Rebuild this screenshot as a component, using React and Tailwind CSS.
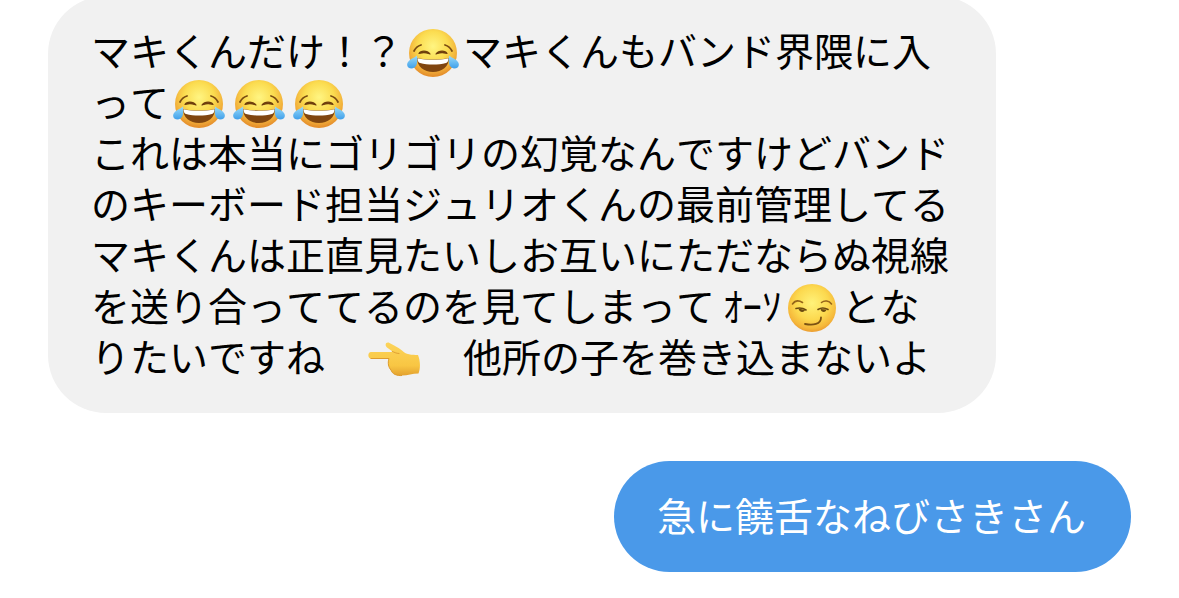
import React from 'react';

const emoji = 'inline-block w-[52px] h-[50px] mx-1 -my-4 align-[3px]';

function JoyEmoji() {
  return (
    <svg viewBox="0 0 52 50" role="img" aria-label="tears of joy" className={emoji}>
      <defs>
        <radialGradient id="joyFace" cx="0.5" cy="0.36" r="0.62">
          <stop offset="0" stopColor="#fff582" />
          <stop offset="0.5" stopColor="#fbdc50" />
          <stop offset="0.82" stopColor="#f2b03a" />
          <stop offset="1" stopColor="#e58f2c" />
        </radialGradient>
        <linearGradient id="joyTear" x1="0" y1="0" x2="0" y2="1">
          <stop offset="0" stopColor="#9adcf9" />
          <stop offset="1" stopColor="#3f9fea" />
        </linearGradient>
      </defs>
      <circle cx="26" cy="24" r="24" fill="url(#joyFace)" />
      <path d="M7 22C8.5 19 11 16.8 14 16M45 22C43.5 19 41 16.8 38 16" fill="none" stroke="#7a4c12" strokeWidth="1.8" strokeLinecap="round" />
      <path d="M12 24.5C13.5 21.5 20 21 23 25C20 23.8 15 23.5 12 24.5ZM29 25C32 21 38.5 21.5 40 24.5C37 23.5 32 23.8 29 25Z" fill="#6f3f0d" stroke="#6f3f0d" strokeWidth="1.2" strokeLinejoin="round" />
      <path d="M10 29C20 31 32 31 42 29C42 37.5 35 43 26 43C17 43 10 37.5 10 29Z" fill="#80450f" />
      <path d="M10.5 29.3C20 31.3 32 31.3 41.5 29.3C41.5 32 40.5 33.5 39 34C31 36 21 36 13 34C11.5 33.5 10.5 32 10.5 29.3Z" fill="#fff" />
      <path d="M10 26.5C10.5 31 11 39 5 39.5C0.5 39.5 -1 36 1 33C3 30 7 29 10 26.5Z" fill="url(#joyTear)" />
      <path d="M42 26.5C41.5 31 41 39 47 39.5C51.5 39.5 53 36 51 33C49 30 45 29 42 26.5Z" fill="url(#joyTear)" />
    </svg>
  );
}

function SmirkEmoji() {
  return (
    <svg viewBox="0 0 52 50" role="img" aria-label="smirk" className={emoji}>
      <defs>
        <radialGradient id="smirkFace" cx="0.5" cy="0.4" r="0.62">
          <stop offset="0" stopColor="#fff27a" />
          <stop offset="0.55" stopColor="#fcd94f" />
          <stop offset="0.85" stopColor="#f5b73a" />
          <stop offset="1" stopColor="#e9962e" />
        </radialGradient>
      </defs>
      <circle cx="26" cy="24" r="24" fill="url(#smirkFace)" />
      <path d="M6.5 20C9 16.5 12.5 16 16.5 18.5M35.5 18.5C38.5 16 43 16.5 45.5 20" fill="none" stroke="#95651a" strokeWidth="1.6" strokeLinecap="round" />
      <path d="M10 24.5C13 23.8 17 24 20 26M32 25.5C35 23.5 39 23.8 42 25.5" fill="none" stroke="#6b4a10" strokeWidth="1.6" strokeLinecap="round" />
      <path d="M12.5 24.5C13 28.5 18 29 19 26ZM34.5 25C35 28.5 40 29 40.5 25.5Z" fill="#6b4a10" />
      <path d="M19 40C27 41.5 35 40.5 35 33.5" fill="none" stroke="#7b5213" strokeWidth="1.8" strokeLinecap="round" />
    </svg>
  );
}

function PointEmoji() {
  return (
    <svg viewBox="0 0 52 50" role="img" aria-label="pointing left" className={emoji}>
      <defs>
        <linearGradient id="pointHand" x1="0" y1="0" x2="0" y2="1">
          <stop offset="0" stopColor="#fcd45a" />
          <stop offset="0.7" stopColor="#f8c643" />
          <stop offset="1" stopColor="#e3a12f" />
        </linearGradient>
      </defs>
      <path d="M3 17H21C22.5 17 23.5 17 24.5 16.5L19 12.5C16 9.5 18.5 6.5 21.5 8C26 10.5 30 12 34 15.5C37.5 19.5 44 20 50 20C52.5 26 52.5 33 50.5 38.5C44 38.5 40 40.5 34 40.5C29 41 24 39 23 35C20.5 32.5 19 28 21 23.5H3C-0.5 23.5 -0.5 17 3 17Z" fill="url(#pointHand)" />
      <path d="M2.5 23.5H21C19.5 28 20.5 32.5 23 35C24 39 29 41 34 40.5" fill="none" stroke="#dd9b2e" strokeWidth="1" />
      <path d="M24.5 16.5C26 17 28 18.5 31 18.5" fill="none" stroke="#e0a032" strokeWidth="1" strokeLinecap="round" />
    </svg>
  );
}

const bubble = 'w-fit whitespace-nowrap pt-7 pb-8 text-[39px] leading-[51px]';

export default function App() {
  return (
    <main lang="ja" className="flex flex-col gap-12 px-12 overflow-hidden bg-white font-['Noto_Sans_CJK_JP',sans-serif] [font-kerning:none]">
      <div className={`${bubble} -mt-1 self-start rounded-[58px] bg-[#f1f1f1] pl-[43px] pr-[47px] text-black`}>
        <p>マキくんだけ！？<JoyEmoji />マキくんもバンド界隈に入</p>
        <p>って<JoyEmoji /><JoyEmoji /><JoyEmoji /></p>
        <p>これは本当にゴリゴリの幻覚なんですけどバンド</p>
        <p>のキーボード担当ジュリオくんの最前管理してる</p>
        <p>マキくんは正直見たいしお互いにただならぬ視線</p>
        <p>を送り合っててるのを見てしまって<span className="ml-2">ｵｰｿ</span><SmirkEmoji />とな</p>
        <p>りたいですね　<PointEmoji />　他所の子を巻き込まないよ</p>
      </div>
      <div className={`${bubble} self-end rounded-[56px] bg-[#4a99e9] pl-[43px] pr-[45px] text-white`}>
        <p>急に饒舌なねびさきさん</p>
      </div>
    </main>
  );
}
